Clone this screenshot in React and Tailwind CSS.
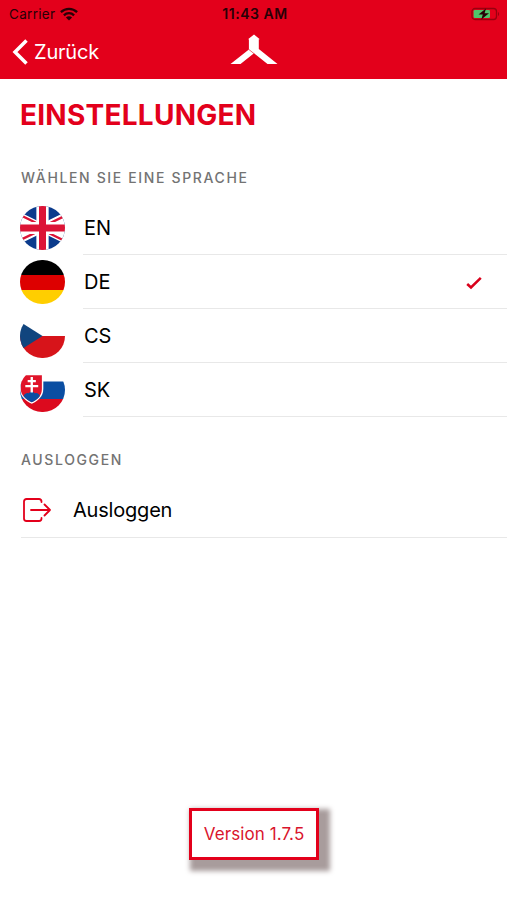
import React, { useState } from 'react';

const FlagEN = () => (
  <>
    <rect width="44" height="44" fill="#0b3b8c" />
    <path d="M-22 0 66 44M66 0-22 44" stroke="#fff" strokeWidth="8.5" />
    <path d="M22 24 66 46M22 20-22-2M22 20.8 66-1.2M22 23.2-22 45.2" stroke="#dc1436" strokeWidth="2.4" />
    <path d="M22 0V44M0 22H44" stroke="#fff" strokeWidth="12" />
    <path d="M22 0V44M0 22H44" stroke="#dc1436" strokeWidth="6.8" />
  </>
);

const FlagDE = () => (
  <>
    <rect width="44" height="15" fill="#000" />
    <rect y="15" width="44" height="15" fill="#dd0000" />
    <rect y="30" width="44" height="14" fill="#ffce00" />
  </>
);

const FlagCS = () => (
  <>
    <rect width="44" height="22" fill="#fff" />
    <rect y="22" width="44" height="22" fill="#d7141a" />
    <path d="M-12 0 22 22-12 44Z" fill="#11457e" />
  </>
);

const FlagSK = () => (
  <>
    <rect width="44" height="14" fill="#fff" />
    <rect y="13.5" width="44" height="17.5" fill="#0b4ea2" />
    <rect y="31" width="44" height="13" fill="#dc0a1e" />
    <path d="M0 6H22.8V21C22.8 29 17 33 11.5 35.8C6 33 0 29 0 21Z" fill="#fff" />
    <path d="M.8 7.2H21.4V21C21.4 28 16.5 31.5 11.5 34.2C6.5 31.500 .8 28 .8 21Z" fill="#e0142a" />
    <path d="M3.500 28C5 25 7.500 24.500 8.500 25.500C9.500 23 13.500 23 14.500 25.500C16 24.500 18 25 19.500 28C17 31.500 14 33 11.500 34.200C9 33 6 31.500 3.500 28Z" fill="#0b4ea2" />
    <path d="M11.500 9V24.500M7.500 13.200H15.500M5.200 18.200H17.800" stroke="#fff" strokeWidth="2.300" />
  </>
);

const languages = [
  { code: 'EN', Flag: FlagEN },
  { code: 'DE', Flag: FlagDE },
  { code: 'CS', Flag: FlagCS },
  { code: 'SK', Flag: FlagSK },
];

const WifiIcon = () => (
  <svg className="w-[18px] h-[14px]" viewBox="0 0 18 14" fill="none" stroke="#280006" strokeWidth="2.3">
    <path d="M.9 5.1C5.5.7 12.5.7 17.1 5.1" />
    <path d="M3.9 8.3C6.8 5.5 11.2 5.5 14.1 8.3" />
    <path d="M9 13.6 5.9 10.4C7.6 8.9 10.4 8.9 12.1 10.4Z" fill="#280006" stroke="none" />
  </svg>
);

const BatteryIcon = () => (
  <svg className="w-[30px] h-[14px]" viewBox="0 0 30 14">
    <rect x="1" y="1.5" width="24.5" height="11" rx="3" fill="none" stroke="#98000f" strokeWidth="1.3" />
    <rect x="2.6" y="3" width="16.4" height="8" rx="1.3" fill="#50c56a" />
    <path d="M27 5V9C28.5 8.5 28.5 5.5 27 5Z" fill="#98000f" />
    <path d="M15 1.5 7.5 7.6H11.8L10.3 12.5 18 6.2H13.6Z" fill="#280006" />
  </svg>
);

const App = () => {
  const [selected, setSelected] = useState('DE');

  return (
    <div className="h-screen flex flex-col bg-white overflow-hidden font-['Inter',sans-serif] text-black">
      <header className="h-[79px] shrink-0 bg-[#e3001b]">
        <div className="h-7 grid grid-cols-3 items-center pl-[9px] pr-[6px] text-[#280006]">
          <div className="flex items-center gap-[5px]">
            <span className="text-[13.5px] tracking-[0.3px]">Carrier</span>
            <WifiIcon />
          </div>
          <span className="text-center text-[14px] leading-5 pb-px font-semibold tracking-[0.55px] whitespace-nowrap">11:43 AM</span>
          <div className="flex justify-end">
            <BatteryIcon />
          </div>
        </div>
        <div className="h-[51px] grid grid-cols-3 items-start">
          <button className="flex items-center pl-3 pt-[9px] gap-[6px] text-white">
            <svg className="w-4 h-[30px]" viewBox="0 0 16 30" fill="none" stroke="currentColor" strokeWidth="3.5">
              <path d="M14.5 3.5 3 15 14.5 26.5" />
            </svg>
            <span className="text-[20px] leading-[30px] tracking-[-0.2px]">Zurück</span>
          </button>
          <svg className="w-12 h-8 mt-[6px] justify-self-center" viewBox="0 0 48 32" fill="#fff">
            <path d="M24 .5 29.8 5.2H28.8V15L47.5 30H37.5L24 19.300 10.500 30H.5L18.900 15.500V5.200H18Z" />
            <path d="M18.900 15.500 24.500 20" stroke="#e3001b" strokeWidth=".6" />
          </svg>
        </div>
      </header>

      <main className="flex-1 flex flex-col">
        <h1 className="mt-[20px] pl-5 text-[28px] leading-8 font-bold tracking-[0.25px] text-[#e3001b]">EINSTELLUNGEN</h1>

        <h2 className="mt-[37px] pl-[21px] text-[14px] leading-5 font-medium tracking-[1.64px] text-[#737373]">
          WÄHLEN SIE EINE SPRACHE
        </h2>
        <ul className="mt-[13px]">
          {languages.map(({ code, Flag }) => (
            <li
              key={code}
              onClick={() => setSelected(code)}
              className="h-[54px] flex items-center pl-5 cursor-pointer"
            >
              <svg className="w-[45px] h-[44px] rounded-full shrink-0" viewBox="0 0 44 44" preserveAspectRatio="none">
                <Flag />
              </svg>
              <div className="ml-[18px] h-full flex-1 flex items-center justify-between border-b border-[#e8e8e8] pr-[25px]">
                <span className="pl-px text-[20px]">{code}</span>
                {selected === code && (
                  <svg className="w-4 h-4 mt-[3px]" viewBox="0 0 16 16" fill="none" stroke="#d9001b" strokeWidth="2.5">
                    <path d="M1.2 9 5 12.5 14.8 2.8" />
                  </svg>
                )}
              </div>
            </li>
          ))}
        </ul>

        <h2 className="mt-[33px] pl-[21px] text-[14px] leading-5 font-medium tracking-[1.64px] text-[#737373]">AUSLOGGEN</h2>
        <button className="mt-[13px] ml-[21px] h-[55px] flex items-center gap-[22px] border-b border-[#e8e8e8] text-left">
          <svg className="ml-[2px] w-7 h-6" viewBox="0 0 28 24" fill="none" stroke="#e3001b" strokeWidth="1.8" strokeLinecap="round" strokeLinejoin="round">
            <path d="M18.5 4V3.5C18.5 2 17.5 1 16 1H3.5C2 1 1 2 1 3.5V20.5C1 22 2 23 3.5 23H16C17.5 23 18.5 22 18.5 20.5V20" />
            <path d="M8 12H27M21.5 6.5 27 12 21.5 17.5" />
          </svg>
          <span className="text-[20px] tracking-[-0.2px]">Ausloggen</span>
        </button>

        <div className="mt-auto mb-[40px] ml-[189px] w-[130px] h-[52px] flex items-center justify-center border-[3px] border-[#e3001b] bg-white pt-[2px] text-[17px] tracking-[0.1px] text-[#d9142d] shadow-[6px_6px_5px_5px_#a89c9c]">
          Version 1.7.5
        </div>
      </main>
    </div>
  );
};

export default App;
